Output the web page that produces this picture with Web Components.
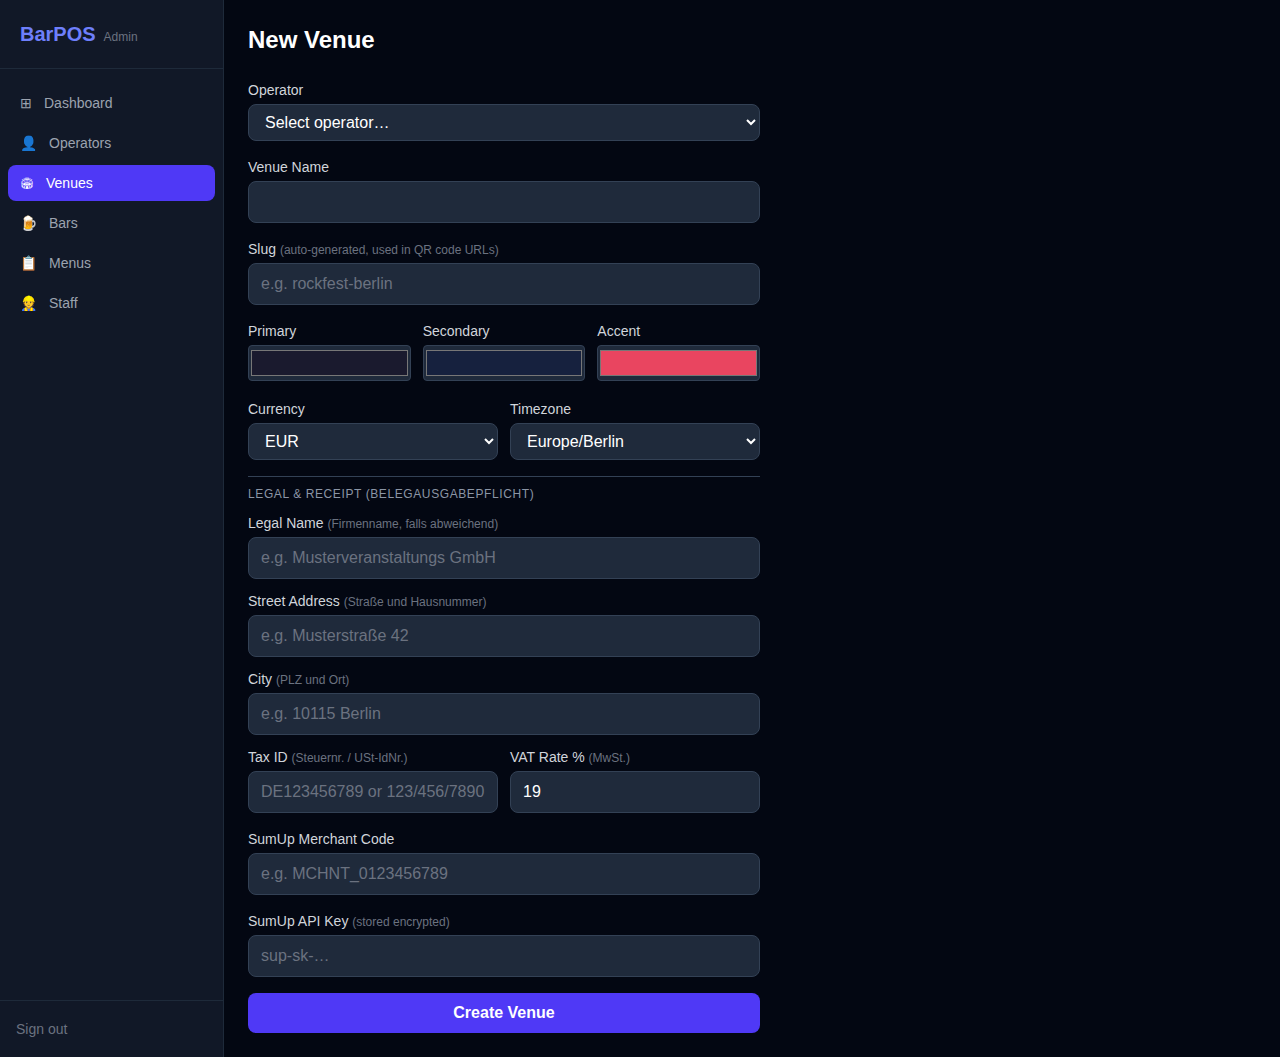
<!DOCTYPE html>
<html lang="en">
<head>
<meta charset="utf-8">
<title>BarPOS Admin</title>
<style>
html,body{margin:0;padding:0;background:#030712;color:#f9fafb;font-family:"Liberation Sans",Arial,sans-serif;}
</style>
</head>
<body>
<bar-app>
  <bar-sidebar slot="side">
    <bar-nav icon="⊞" href="#">Dashboard</bar-nav>
    <bar-nav icon="👤" href="#">Operators</bar-nav>
    <bar-nav icon="&#x1F3DF;" icon-size="11px" href="#" active>Venues</bar-nav>
    <bar-nav icon="🍺" href="#">Bars</bar-nav>
    <bar-nav icon="📋" href="#">Menus</bar-nav>
    <bar-nav icon="👷" href="#">Staff</bar-nav>
  </bar-sidebar>
  <bar-form heading="New Venue">
    <bar-field label="Operator" type="select" options="Select operator…"></bar-field>
    <bar-field label="Venue Name"></bar-field>
    <bar-field label="Slug" hint="(auto-generated, used in QR code URLs)" placeholder="e.g. rockfest-berlin"></bar-field>
    <bar-row cols="3" class="colors">
      <bar-field label="Primary" type="color" value="#1a1a2e"></bar-field>
      <bar-field label="Secondary" type="color" value="#16213e"></bar-field>
      <bar-field label="Accent" type="color" value="#e94560"></bar-field>
    </bar-row>
    <bar-row cols="2" after="2">
      <bar-field label="Currency" type="select" options="EUR"></bar-field>
      <bar-field label="Timezone" type="select" options="Europe/Berlin"></bar-field>
    </bar-row>
    <bar-section heading="Legal &amp; Receipt (Belegausgabepflicht)">
      <bar-field label="Legal Name" hint="(Firmenname, falls abweichend)" placeholder="e.g. Musterveranstaltungs GmbH"></bar-field>
      <bar-field label="Street Address" hint="(Straße und Hausnummer)" placeholder="e.g. Musterstraße 42"></bar-field>
      <bar-field label="City" hint="(PLZ und Ort)" placeholder="e.g. 10115 Berlin"></bar-field>
      <bar-row cols="2">
        <bar-field label="Tax ID" hint="(Steuernr. / USt-IdNr.)" placeholder="DE123456789 or 123/456/7890"></bar-field>
        <bar-field label="VAT Rate %" hint="(MwSt.)" value="19"></bar-field>
      </bar-row>
    </bar-section>
    <bar-field label="SumUp Merchant Code" placeholder="e.g. MCHNT_0123456789"></bar-field>
    <bar-field label="SumUp API Key" hint="(stored encrypted)" placeholder="sup-sk-…"></bar-field>
    <bar-button>Create Venue</bar-button>
  </bar-form>
</bar-app>
<script>
function define(name, css, html){
  customElements.define(name, class extends HTMLElement{
    connectedCallback(){
      if(this.shadowRoot) return;
      const root=this.attachShadow({mode:'open'});
      const esc=s=>String(s??'').replace(/&/g,'&amp;').replace(/"/g,'&quot;').replace(/</g,'&lt;');
      root.innerHTML='<style>'+css+'</style>'+(typeof html==='function'?html(this,esc):html);
    }
  });
}
define('bar-app',
 `:host{display:flex;height:100vh;align-items:stretch}
  main{flex:1;min-width:0;padding:24px}`,
 `<slot name="side"></slot><main><slot></slot></main>`);

define('bar-sidebar',
 `:host{display:flex;flex-direction:column;width:224px;flex:none;box-sizing:border-box;background:#111827;border-right:1px solid #1e2a3a}
  header{display:flex;align-items:baseline;gap:8px;padding:20px;height:69px;box-sizing:border-box;border-bottom:1px solid #1e2a3a}
  .logo{font-size:20px;line-height:28px;font-weight:700;color:#6e7ffb}
  .role{font-size:12px;line-height:16px;color:#6b7280}
  nav{flex:1;display:flex;flex-direction:column;gap:4px;padding:16px 8px}
  footer{border-top:1px solid #1e2a3a;padding:18px 16px}
  a{display:block;font-size:14px;line-height:20px;color:#6b7280;text-decoration:none}`,
 `<header><span class="logo">BarPOS</span><span class="role">Admin</span></header>
  <nav><slot></slot></nav>
  <footer><a href="#">Sign out</a></footer>`);

define('bar-nav',
 `:host{display:block}
  a{display:flex;align-items:center;gap:12px;height:36px;box-sizing:border-box;padding:8px 12px;border-radius:8px;font-size:14px;line-height:20px;color:#9ca3af;text-decoration:none}
  :host([active]) a{background:#4f39f6;color:#fff}`,
 (el,esc)=>{
   const s=el.getAttribute('icon-size');
   return `<a href="${esc(el.getAttribute('href'))}"><span${s?` style="font-size:${esc(s)}"`:''}>${esc(el.getAttribute('icon'))}</span><span><slot></slot></span></a>`;
 });

define('bar-form',
 `:host{display:flex;flex-direction:column;gap:16px;width:512px}
  h1{margin:0 0 8px;font-size:24px;line-height:32px;font-weight:700;color:#fff}`,
 (el,esc)=>`<h1>${esc(el.getAttribute('heading'))}</h1><slot></slot>`);

define('bar-row',
 `:host{display:grid;gap:12px;min-width:0}
  :host([cols="2"]){grid-template-columns:repeat(2,minmax(0,1fr))}
  :host([cols="3"]){grid-template-columns:repeat(3,minmax(0,1fr));margin-bottom:2px}`,
 `<slot></slot>`);

define('bar-section',
 `:host{display:flex;flex-direction:column;gap:12px;border-top:1px solid #334155;padding-top:9px}
  h2{margin:0 0 -1px;font-size:12px;line-height:16px;font-weight:400;letter-spacing:.6px;text-transform:uppercase;color:#8b95a5}`,
 (el,esc)=>`<h2>${esc(el.getAttribute('heading'))}</h2><slot></slot>`);

define('bar-field',
 `:host{display:block;min-width:0}
  label{display:block}
  .t{display:block;height:20px;font-size:14px;line-height:20px;color:#d1d5db;margin-bottom:4px;white-space:nowrap}
  .h{font-size:12px;line-height:16px;color:#6b7280}
  input,select{display:block;width:100%;box-sizing:border-box;margin:0;background:#1f2a3b;border:1px solid #334155;border-radius:8px;color:#fff;font:16px/24px "Liberation Sans",Arial,sans-serif;outline:none}
  input{height:42px;padding:8px 12px}
  input::placeholder{color:#6b7280;opacity:1}
  select{height:37px;padding:8px 12px;line-height:normal}
  input[type=color]{height:36px;padding:0;border-radius:4px;cursor:pointer}`,
 (el,esc)=>{
   const type=el.getAttribute('type')||'text', lab=esc(el.getAttribute('label')), hint=el.getAttribute('hint');
   let ctl;
   if(type==='select'){
     ctl=`<select>${(el.getAttribute('options')||'').split('|').map(o=>`<option>${esc(o)}</option>`).join('')}</select>`;
   }else{
     const v=el.getAttribute('value'), p=el.getAttribute('placeholder');
     ctl=`<input type="${type}"${v?` value="${esc(v)}"`:''}${p?` placeholder="${esc(p)}"`:''}>`;
   }
   return `<label><span class="t">${lab}${hint?` <span class="h">${esc(hint)}</span>`:''}</span>${ctl}</label>`;
 });

define('bar-button',
 `:host{display:block}
  button{display:block;width:100%;height:40px;border:0;border-radius:8px;background:#4f39f6;color:#fff;font:700 16px/24px "Liberation Sans",Arial,sans-serif;cursor:pointer}`,
 `<button type="button"><slot></slot></button>`);
</script>
</body>
</html>
